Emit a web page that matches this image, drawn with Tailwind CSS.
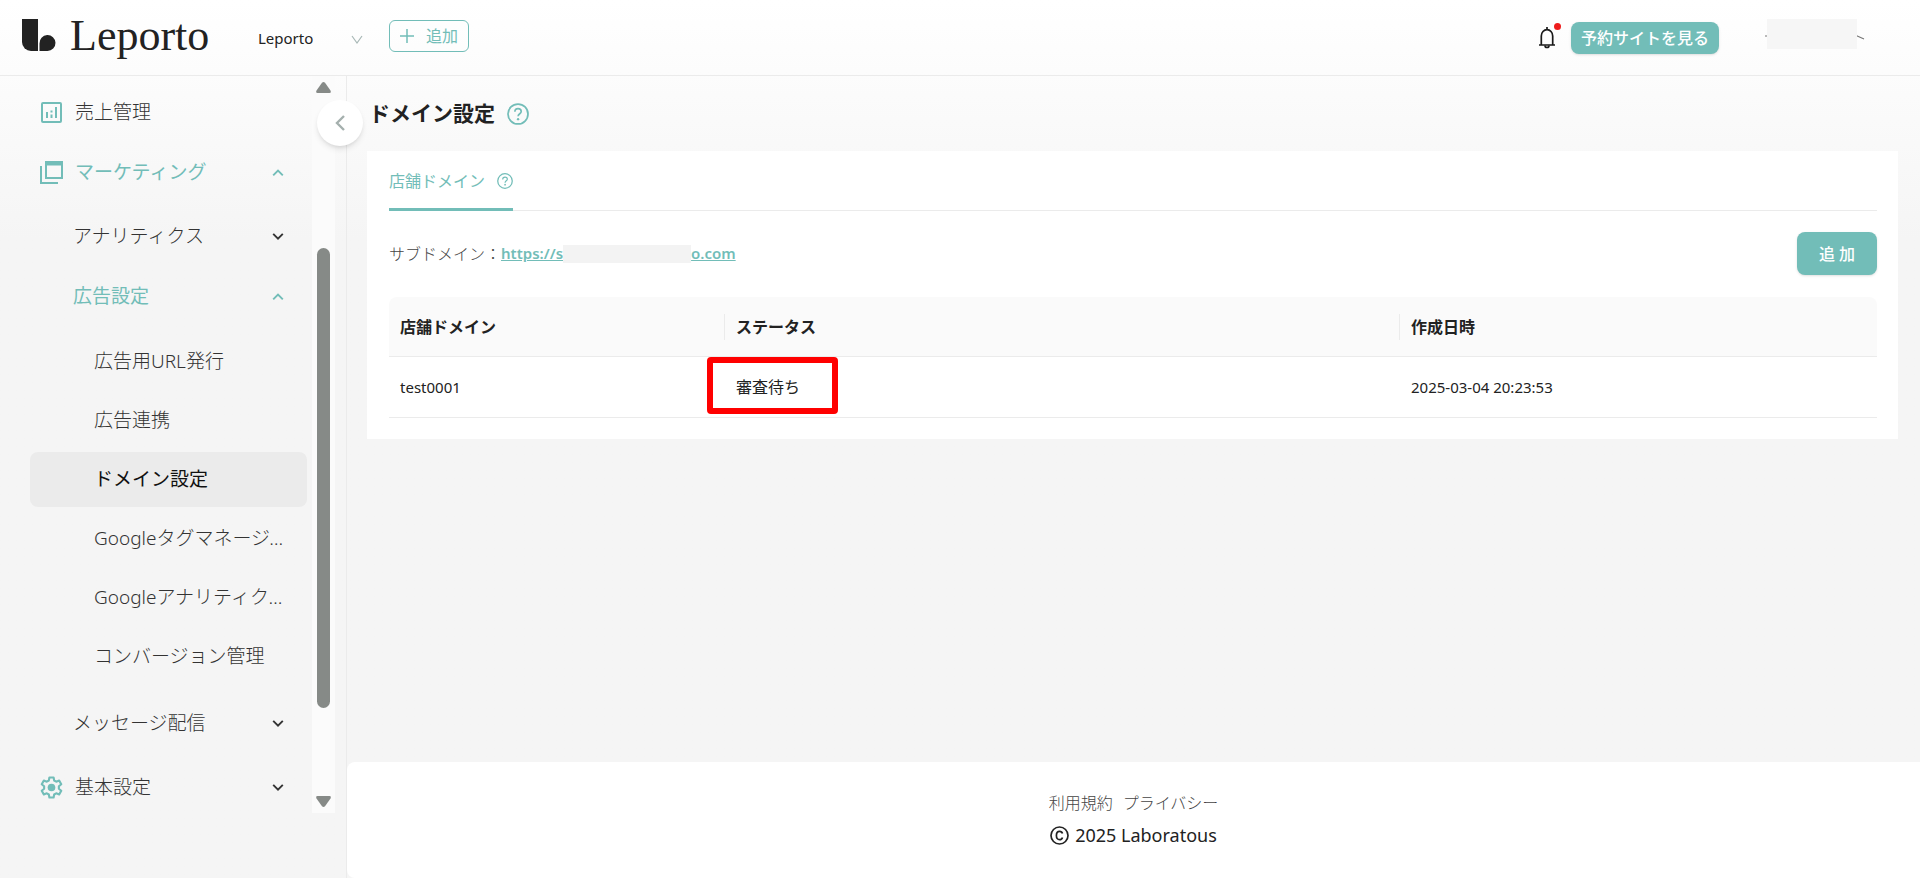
<!DOCTYPE html>
<html lang="ja">
<head>
  <meta charset="UTF-8">
  <meta name="viewport" content="width=device-width, initial-scale=1.0">
  <title>ドメイン設定 - Leporto</title>
  <script src="https://cdn.jsdelivr.net/npm/@tailwindcss/browser@4"></script>
</head>
<body class="min-h-screen flex flex-col bg-[#f5f5f5] bg-linear-to-b from-white to-[#f5f5f5] to-[240px] text-[#222] text-base font-['Noto_Sans','Noto_Sans_CJK_JP',sans-serif]">
  <!-- Icons used more than once -->
  <svg class="hidden">
    <symbol id="down" viewBox="0 0 12 12"><path d="M1.2 2.8 6 7.600l4.800-4.800" fill="none" stroke="currentColor" stroke-width="1.9"/></symbol>
    <symbol id="up" viewBox="0 0 12 12"><path d="M1.200 8.400 6 3.600l4.800 4.800" fill="none" stroke="currentColor" stroke-width="1.9"/></symbol>
    <symbol id="help" viewBox="0 0 24 24">
      <circle cx="12" cy="12" r="10.9" fill="none" stroke="currentColor" stroke-width="1.9"/>
      <path d="M8.600 9.600C8.600 7.500 10 6.200 12 6.200s3.500 1.300 3.500 3.100c0 2.400-3.400 2.500-3.400 5.200" fill="none" stroke="currentColor" stroke-width="1.8"/>
      <circle cx="12.1" cy="17.6" r="1.3" fill="currentColor"/>
    </symbol>
  </svg>

  <!-- Header -->
  <header class="h-[76px] shrink-0 flex items-center border-b border-[#ebebeb] pl-[22px] pr-[54px] pb-3">
    <a href="#" class="flex items-center gap-3.5 text-[#222]">
      <svg class="w-[34px] h-8 mt-1.5" viewBox="0 0 34 32" fill="currentColor">
        <path d="M0 0h16v32H9a9 9 0 0 1-9-9z"/>
        <path d="M17.5 32v-7.500a8 8 0 1 1 8 7.500z"/>
      </svg>
      <span class="w-[144px] mt-2 font-['Liberation_Serif',serif] text-[44px] leading-[60px]">Leporto</span>
    </a>
    <div class="relative ml-11 mt-3">
      <select aria-label="店舗" class="appearance-none w-[105px] text-[15px] leading-6 bg-transparent">
        <option>Leporto</option>
      </select>
      <svg class="absolute right-0 top-2 w-3 h-3 text-[#a8b8b6] pointer-events-none" viewBox="0 0 12 12"><path d="M1 2l5 7 5-7" fill="none" stroke="currentColor" stroke-width="1.2"/></svg>
    </div>
    <button class="ml-[26px] mt-2 h-8 w-20 flex items-center justify-center gap-3 border border-[#72bdb8] rounded-md text-[#72bdb8]">
      <svg class="w-3.5 h-3.5" viewBox="0 0 14 14"><path d="M7 0v14M0 7h14" stroke="currentColor" stroke-width="1.5"/></svg>
      <span>追加</span>
    </button>
    <div class="ml-auto mt-3 flex items-center">
      <button aria-label="お知らせ" class="relative">
        <svg class="w-4 h-[22px]" viewBox="0 0 16 22" fill="none" stroke="#1a1a1a" stroke-width="1.7">
          <path d="M2.300 18V9a5.700 6.300 0 0 1 11.400 0v9M0 18h16M8 0v3"/>
          <path d="M6 18.500a2 2 0 0 0 4 0"/>
        </svg>
        <span class="absolute -right-1.5 -top-1 size-[7px] rounded-full bg-[#ee1c1c]"></span>
      </button>
      <a href="#" class="ml-4 h-8 w-[148px] flex items-center justify-center rounded-lg bg-[#72bdb8] text-white font-medium shadow-sm">予約サイトを見る</a>
      <svg class="ml-[45px] mb-2 w-[102px] h-[30px]" viewBox="0 0 102 30">
        <path d="M1 17h3M91 16l9 4" stroke="#777" stroke-width="1.2"/>
        <path d="M3 0h90v30H3z" fill="#f6f6f6"/>
      </svg>
    </div>
  </header>

  <div class="flex flex-1">
    <!-- Sidebar -->
    <aside class="relative w-[347px] shrink-0 border-r border-[#ebebeb]">
      <div class="flex">
        <nav class="flex-1 min-w-0 pl-[30px] pr-[5px] pt-[9px] text-[19px] font-light text-[#333]">
          <ul class="flex flex-col gap-[5px]">
            <li>
              <a href="#" class="flex items-center h-[55px] pl-[11px] pr-[23px]">
                <svg class="w-[21px] h-[21px] mr-[13px] text-[#72bdb8]" viewBox="0 0 21 21" fill="none" stroke="currentColor" stroke-width="2">
                  <rect x="1" y="1" width="19" height="19" rx="1"/><path d="M6 10v6M10.500 12.500V16M10.500 8.500v2M15 5v11"/>
                </svg>
                売上管理
              </a>
            </li>
            <li>
              <button class="w-full flex items-center h-[55px] pl-[10px] pr-[23px] text-[#72bdb8] font-normal">
                <svg class="w-[23px] h-[23px] mr-3" viewBox="0 0 23 23" fill="none" stroke="currentColor" stroke-width="2">
                  <rect x="6" y="1" width="16" height="16"/><path d="M5 2.500h18" stroke-width="4"/><path d="M1 5v17h17"/>
                </svg>
                マーケティング
                <svg class="w-3 h-3 ml-auto"><use href="#up"/></svg>
              </button>
              <ul class="flex flex-col gap-[5px] pt-[9px]">
                <li>
                  <button class="w-full flex items-center h-[55px] pl-[43px] pr-[23px]">アナリティクス<svg class="w-3 h-3 ml-auto"><use href="#down"/></svg></button>
                </li>
                <li>
                  <button class="w-full flex items-center h-[55px] pl-[43px] pr-[23px] text-[#72bdb8] font-normal">広告設定<svg class="w-3 h-3 ml-auto"><use href="#up"/></svg></button>
                  <ul class="flex flex-col gap-1 pt-2.5 pb-[7px]">
                    <li><a href="#" class="flex items-center h-[55px] pl-16 pr-5">広告用URL発行</a></li>
                    <li><a href="#" class="flex items-center h-[55px] pl-16 pr-5">広告連携</a></li>
                    <li><a href="#" class="flex items-center h-[55px] pl-16 pr-5 rounded-lg bg-[#ebebeb] text-[#111] font-normal">ドメイン設定</a></li>
                    <li><a href="#" class="block h-[55px] leading-[55px] pl-16 pr-5 truncate">Googleタグマネージャー</a></li>
                    <li><a href="#" class="block h-[55px] leading-[55px] pl-16 pr-5 truncate">Googleアナリティクス</a></li>
                    <li><a href="#" class="flex items-center h-[55px] pl-16 pr-5 whitespace-nowrap">コンバージョン管理</a></li>
                  </ul>
                </li>
                <li>
                  <button class="w-full flex items-center h-[55px] pl-[43px] pr-[23px]">メッセージ配信<svg class="w-3 h-3 ml-auto"><use href="#down"/></svg></button>
                </li>
              </ul>
            </li>
            <li class="pt-1">
              <button class="w-full flex items-center h-[55px] pl-[10px] pr-[23px]">
                <svg class="w-[23px] h-[23px] mr-3 text-[#72bdb8]" viewBox="0 0 24 24" fill="none" stroke="currentColor" stroke-width="2.2" stroke-linejoin="round">
                  <path d="M9.800 1.500h4.400l.6 3.200 2.100 1.200 3.100-1.100 2.200 3.800-2.500 2.100v2.600l2.500 2.100-2.200 3.800-3.100-1.100-2.100 1.200-.6 3.200H9.800l-.6-3.200-2.100-1.200L4 19.200l-2.200-3.800 2.500-2.100v-2.600L1.800 8.600 4 4.800l3.100 1.100 2.100-1.200z"/>
                  <circle cx="12" cy="12" r="4" fill="currentColor" stroke="none"/>
                </svg>
                基本設定
                <svg class="w-3 h-3 ml-auto"><use href="#down"/></svg>
              </button>
            </li>
          </ul>
        </nav>
        <!-- Scrollbar -->
        <div class="w-[23px] h-[737px] mr-[11px] bg-[#fbfbfb] flex flex-col items-center py-1.5 text-[#868a87]">
          <svg class="w-[15px] h-[11px]" viewBox="0 0 15 11" fill="currentColor"><path d="M6 .8Q7.500-.6 9 .8l5.500 7.700Q15.500 11 13.500 11h-12Q-.5 11 .5 8.500z"/></svg>
          <div class="grow-[155]"></div>
          <div class="w-[13px] grow-[461] rounded-full bg-[#868a87]"></div>
          <div class="grow-[88]"></div>
          <svg class="w-[15px] h-[11px]" viewBox="0 0 15 11" fill="currentColor"><path d="M6 10.200q1.500 1.400 3 0l5.500-7.700Q15.500 0 13.500 0h-12Q-.5 0 .5 2.500z"/></svg>
        </div>
      </div>
      <button aria-label="メニューを閉じる" class="absolute top-6 -right-[17px] size-[46px] rounded-full bg-white shadow-md flex items-center justify-center text-[#a5b0ae]">
        <svg class="w-2.5 h-4" viewBox="0 0 10 16"><path d="M9 1 2 8l7 7" fill="none" stroke="currentColor" stroke-width="2.4"/></svg>
      </button>
    </aside>

    <main class="flex-1 min-w-0 flex flex-col">
      <div class="pl-5 pr-[22px]">
        <h1 class="h-[75px] flex items-center gap-3 pl-0.5 text-[21px] font-bold">
          ドメイン設定
          <svg class="w-[22px] h-[22px] text-[#72bdb8]"><use href="#help"/></svg>
        </h1>

        <section class="bg-white pl-[22px] pr-[21px] pb-[21px]">
          <div class="flex h-[60px] border-b border-[#ebebeb]">
            <button class="h-[60px] flex items-center gap-3 pt-0.5 border-b-3 border-[#72bdb8] text-[#72bdb8]">
              店舗ドメイン
              <svg class="w-4 h-4"><use href="#help"/></svg>
            </button>
          </div>

          <div class="flex items-center justify-between pt-[21px] pb-[22px]">
            <p class="flex items-center text-[#444]">
              <span class="font-light">サブドメイン：</span>
              <a href="#" class="flex items-center text-[15px] font-semibold text-[#72bdb8] underline"><span>https://s</span><span class="w-[128px] h-[18px] bg-[#f3f3f3]"></span><span>o.com</span></a>
            </p>
            <button class="w-20 h-[43px] rounded-lg bg-[#72bdb8] text-white font-medium shadow-sm">追 加</button>
          </div>

          <!-- Domain list -->
          <table class="w-full table-fixed text-left border-separate border-spacing-0">
            <thead class="bg-[#fafafa]">
              <tr class="h-[60px]">
                <th class="w-[336px] p-0 rounded-tl-lg border-b border-[#ebebeb]"><div class="h-[26px] leading-[26px] pl-[11px] border-r border-[#ebebeb]">店舗ドメイン</div></th>
                <th class="w-[675px] p-0 border-b border-[#ebebeb]"><div class="h-[26px] leading-[26px] pl-[11px] border-r border-[#ebebeb]">ステータス</div></th>
                <th class="p-0 pl-[11px] rounded-tr-lg border-b border-[#ebebeb]">作成日時</th>
              </tr>
            </thead>
            <tbody>
              <tr class="h-[61px]">
                <td class="p-0 pl-[11px] border-b border-[#ebebeb] text-[15px]">test0001</td>
                <td class="relative p-0 pl-[11px] border-b border-[#ebebeb]">
                  審査待ち
                  <span class="absolute -left-[18px] top-0 w-[131px] h-[57px] border-6 border-[#f00] rounded-sm"></span>
                </td>
                <td class="p-0 pl-[11px] border-b border-[#ebebeb] text-[15px]">2025-03-04 20:23:53</td>
              </tr>
            </tbody>
          </table>
        </section>
      </div>

      <footer class="mt-auto h-[116px] bg-white rounded-l-lg flex flex-col items-center pt-[29px]">
        <div class="flex gap-2.5 leading-6 font-light text-[#444]">
          <a href="#">利用規約</a>
          <a href="#">プライバシー</a>
        </div>
        <p class="mt-2 flex items-center gap-1.5 text-lg leading-6">
          <svg class="w-[19px] h-[19px]" viewBox="0 0 19 19" fill="none" stroke="currentColor" stroke-width="1.7"><circle cx="9.500" cy="9.500" r="8.500"/><path d="M12.500 7.500c-.4-1.400-1.500-2.200-2.900-2.200-2 0-3.200 1.600-3.200 4.200s1.200 4.200 3.200 4.200c1.400 0 2.500-.8 2.900-2.200"/></svg>
          2025 Laboratous
        </p>
      </footer>
    </main>
  </div>
</body>
</html>
